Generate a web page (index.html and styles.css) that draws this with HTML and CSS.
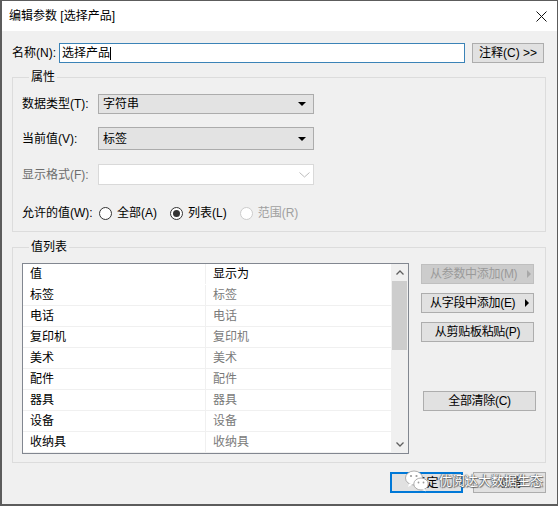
FILE: index.html
```html
<!DOCTYPE html>
<html lang="zh-CN">
<head>
    <meta charset="UTF-8">
    <title>编辑参数 [选择产品]</title>
    <link rel="stylesheet" href="styles.css">
</head>
<body>
<div class="window">
    <div class="titlebar">
        <span class="title">编辑参数 [选择产品]</span>
        <svg class="close" width="11" height="11" viewBox="0 0 11 11">
            <path d="M0.5 0.5L10.5 10.5M10.5 0.5L0.5 10.5" stroke="#111" stroke-width="1"/>
        </svg>
    </div>

    <div class="content">
        <div class="name-row">
            <label class="name-label">名称(N):</label>
            <div class="text-input">选择产品<span class="caret"></span></div>
            <button class="btn btn-note">注释(C) &gt;&gt;</button>
        </div>

        <fieldset class="group group-props">
            <legend>属性</legend>
            <div class="field-row row-type">
                <label class="field-label">数据类型(T):</label>
                <div class="combo"><span>字符串</span><i class="tri-down"></i></div>
            </div>
            <div class="field-row row-current">
                <label class="field-label">当前值(V):</label>
                <div class="combo combo-focus"><span>标签</span><i class="tri-down"></i></div>
            </div>
            <div class="field-row row-format">
                <label class="field-label disabled">显示格式(F):</label>
                <div class="combo combo-disabled">
                    <span></span>
                    <svg width="11" height="6" viewBox="0 0 11 6"><path d="M0.5 0.5L5.5 5L10.5 0.5" fill="none" stroke="#bcbcbc" stroke-width="1"/></svg>
                </div>
            </div>
            <div class="field-row row-allowed">
                <label class="field-label">允许的值(W):</label>
                <div class="radios">
                    <span class="radio"><i class="dot"></i>全部(A)</span>
                    <span class="radio checked"><i class="dot"></i>列表(L)</span>
                    <span class="radio disabled"><i class="dot"></i>范围(R)</span>
                </div>
            </div>
        </fieldset>

        <fieldset class="group group-list">
            <legend>值列表</legend>
            <div class="list-area">
                <div class="listbox">
                    <div class="list-rows">
                        <div class="list-row head"><span>值</span><span>显示为</span></div>
                        <div class="list-row"><span>标签</span><span>标签</span></div>
                        <div class="list-row"><span>电话</span><span>电话</span></div>
                        <div class="list-row"><span>复印机</span><span>复印机</span></div>
                        <div class="list-row"><span>美术</span><span>美术</span></div>
                        <div class="list-row"><span>配件</span><span>配件</span></div>
                        <div class="list-row"><span>器具</span><span>器具</span></div>
                        <div class="list-row"><span>设备</span><span>设备</span></div>
                        <div class="list-row"><span>收纳具</span><span>收纳具</span></div>
                    </div>
                    <div class="scrollbar">
                        <div class="sb-arrow">
                            <svg width="8" height="5" viewBox="0 0 8 5"><path d="M0.5 4.5L4 1L7.5 4.5" fill="none" stroke="#606060" stroke-width="1.3"/></svg>
                        </div>
                        <div class="sb-thumb"></div>
                        <div class="sb-track"></div>
                        <div class="sb-arrow">
                            <svg width="8" height="5" viewBox="0 0 8 5"><path d="M0.5 0.5L4 4L7.5 0.5" fill="none" stroke="#606060" stroke-width="1.3"/></svg>
                        </div>
                    </div>
                </div>
                <div class="list-buttons">
                    <button class="btn btn-menu" disabled>从参数中添加(M)<i class="tri-right"></i></button>
                    <button class="btn btn-menu">从字段中添加(E)<i class="tri-right"></i></button>
                    <button class="btn">从剪贴板粘贴(P)</button>
                    <button class="btn btn-clear">全部清除(C)</button>
                </div>
            </div>
        </fieldset>

        <div class="footer">
            <button class="btn btn-ok">确定</button>
            <button class="btn">取消</button>
            <div class="watermark">
                <svg class="wm-icon" width="24" height="22" viewBox="0 0 24 22">
                    <ellipse cx="9" cy="8" rx="8.5" ry="7" fill="#fff" stroke="#9a9a9a" stroke-width="0.8"/>
                    <path d="M4 13.5L3 17L7.5 14.5Z" fill="#fff"/>
                    <ellipse cx="16" cy="14" rx="7.2" ry="6" fill="#fff" stroke="#9a9a9a" stroke-width="0.8"/>
                    <path d="M19.5 19L21 21.5L17 19.8Z" fill="#fff"/>
                    <circle cx="6" cy="6" r="1.1" fill="#9a9a9a"/>
                    <circle cx="11.5" cy="6" r="1.1" fill="#9a9a9a"/>
                    <circle cx="13.5" cy="12.5" r="0.9" fill="#9a9a9a"/>
                    <circle cx="18.5" cy="12.5" r="0.9" fill="#9a9a9a"/>
                </svg>
                <span class="wm-text">优阅达大数据生态</span>
            </div>
        </div>
    </div>
</div>
</body>
</html>
```

FILE: styles.css
```css
body {
    margin: 0;
    padding: 0;
    background-color: #f0f0f0;
    font-family: "Liberation Sans", "Noto Sans CJK SC", sans-serif;
    font-size: 12px;
    line-height: 16px;
    color: #000;
}
.window {
    width: 558px;
    height: 506px;
    box-sizing: border-box;
    border: 1px solid #5c5c5c;
    border-left-width: 2px;
    border-bottom-width: 2px;
    background-color: #f0f0f0;
    overflow: hidden;
}
.titlebar {
    height: 30px;
    background-color: #fff;
    display: flex;
    align-items: center;
    justify-content: space-between;
    padding: 0 10px 0 7px;
}
.content {
    padding: 12px 11px 0 10px;
}

/* name row */
.name-row {
    display: flex;
    align-items: center;
    height: 20px;
}
.name-label {
    width: 47px;
}
.text-input {
    width: 406px;
    height: 20px;
    box-sizing: border-box;
    border: 1px solid #3b83b7;
    background-color: #fff;
    padding-left: 2px;
    display: flex;
    align-items: center;
}
.caret {
    display: inline-block;
    width: 1px;
    height: 13px;
    background-color: #000;
}
.btn {
    font-family: inherit;
    font-size: 12px;
    line-height: 16px;
    color: #000;
    background-color: #e1e1e1;
    border: 1px solid #adadad;
    height: 20px;
    padding: 0;
    box-sizing: border-box;
    display: flex;
    align-items: center;
    justify-content: center;
    white-space: nowrap;
}
.btn:disabled {
    background-color: #cccccc;
    border-color: #bfbfbf;
    color: #9a9a9a;
}
.btn-note {
    width: 72px;
    margin-left: 7px;
}

/* group boxes */
.group {
    margin: 0;
    border: 1px solid #dcdcdc;
    min-width: 0;
}
.group legend {
    padding: 0 2px;
    margin-left: 7px;
    line-height: 16px;
}
.group-props {
    margin-top: 6px;
    padding: 9px 8px 8px 9px;
}
.field-row {
    display: flex;
    align-items: center;
}
.row-type { height: 20px; }
.row-current { height: 23px; margin-top: 13px; }
.row-format { height: 21px; margin-top: 14px; }
.row-allowed { height: 20px; margin-top: 18px; }
.field-label {
    width: 76px;
}
.field-label.disabled {
    color: #6d6d6d;
}
.combo {
    width: 216px;
    height: 100%;
    box-sizing: border-box;
    background-color: #e3e3e3;
    border: 1px solid #acacac;
    display: flex;
    align-items: center;
    justify-content: space-between;
    padding: 0 7px 0 4px;
}
.combo-disabled {
    background-color: #fff;
    border-color: #d9d9d9;
    padding-right: 3px;
}
.tri-down {
    width: 0;
    height: 0;
    border-left: 4px solid transparent;
    border-right: 4px solid transparent;
    border-top: 4px solid #000;
}
.radios {
    display: flex;
    align-items: center;
}
.radio {
    display: flex;
    align-items: center;
    margin-right: 12px;
}
.radio .dot {
    width: 13px;
    height: 13px;
    box-sizing: border-box;
    border: 1px solid #333;
    border-radius: 50%;
    background-color: #fff;
    margin: 0 5px 0 1px;
    position: relative;
}
.radio.checked .dot::after {
    content: "";
    position: absolute;
    left: 2px;
    top: 2px;
    width: 7px;
    height: 7px;
    border-radius: 50%;
    background-color: #333;
}
.radio.disabled {
    color: #a0a0a0;
}
.radio.disabled .dot {
    border-color: #cccccc;
}

/* value list */
.group-list {
    margin-top: 7px;
    padding: 8px 11px 8px 9px;
}
.list-area {
    display: flex;
}
.listbox {
    flex: none;
    width: 387px;
    height: 191px;
    box-sizing: border-box;
    border: 1px solid #828790;
    background-color: #fff;
    display: flex;
}
.list-rows {
    flex: 1;
}
.list-row {
    display: flex;
    height: 21px;
    box-sizing: border-box;
    border-bottom: 1px solid #f0f0f0;
    align-items: center;
}
.list-row span {
    box-sizing: border-box;
    padding-left: 7px;
    height: 100%;
    display: flex;
    align-items: center;
}
.list-row span:first-child {
    width: 183px;
    border-right: 1px solid #f0f0f0;
}
.list-row span:last-child {
    color: #7a7a7a;
}
.list-row.head {
    border-bottom-color: #fff;
}
.list-row.head span:last-child {
    color: #000;
}
.scrollbar {
    width: 17px;
    background-color: #f0f0f0;
    display: flex;
    flex-direction: column;
}
.sb-arrow {
    height: 17px;
    display: flex;
    align-items: center;
    justify-content: center;
}
.sb-thumb {
    height: 69px;
    margin: 0 1px;
    background-color: #cdcdcd;
}
.sb-track {
    flex: 1;
}
.list-buttons {
    flex: none;
    margin-left: 12px;
    padding-top: 1px;
    display: flex;
    flex-direction: column;
}
.list-buttons .btn {
    width: 113px;
    margin-bottom: 9px;
    letter-spacing: -0.3px;
}
.btn-menu {
    justify-content: flex-start;
    padding-left: 8px;
}
.tri-right {
    margin-left: 10px;
    width: 0;
    height: 0;
    border-top: 4px solid transparent;
    border-bottom: 4px solid transparent;
    border-left: 4px solid #000;
}
.btn:disabled .tri-right {
    border-left-color: #a8a8a8;
}
.list-buttons .btn-clear {
    margin-top: 40px;
    margin-left: 2px;
}

/* footer */
.footer {
    margin-top: 9px;
    display: flex;
    justify-content: flex-end;
    position: relative;
}
.footer .btn {
    width: 73px;
    height: 21px;
}
.btn-ok {
    border: 2px solid #0078d7;
    margin-right: 10px;
    width: 72px;
}
.watermark {
    position: absolute;
    left: 393px;
    top: -2px;
    display: flex;
    align-items: center;
}
.wm-icon {
    margin-right: 10px;
}
.wm-text {
    color: #fff;
    font-size: 13px;
    text-shadow: 0 0 1px #444, 1px 1px 1px #666, -1px 0 1px #777;
}
```
